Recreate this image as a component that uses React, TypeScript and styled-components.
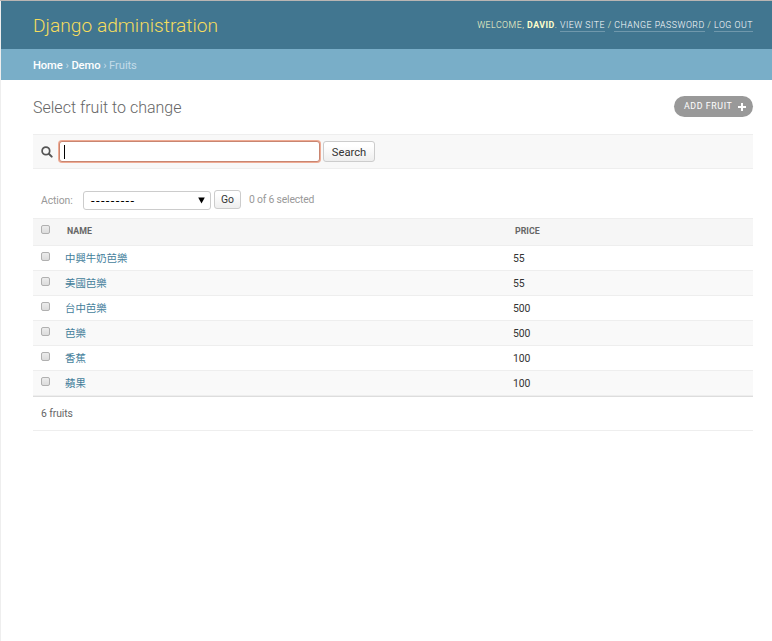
import React from "react";
import styled, { createGlobalStyle } from "styled-components";

const GlobalStyle = createGlobalStyle`
  * { box-sizing: border-box; }
  html, body { margin: 0; padding: 0; background: #fff; }
  body {
    font-family: Roboto, "Noto Sans CJK TC", sans-serif;
    font-size: 10.4px;
    color: #333;
    overflow: hidden;
  }
`;

const Page = styled.div`
  height: 641px;
  border-top: 1px solid #b9b5b3;
  display: flex;
`;

const Edge = styled.div`
  width: 1px;
  flex: none;
  background: #eee;
`;

const Main = styled.div`
  flex: 1;
  min-width: 0;
`;

const Header = styled.header`
  height: 48px;
  padding: 0 19px 0 32px;
  display: flex;
  justify-content: space-between;
  background: #417690;
  color: #ffc;
`;

const Brand = styled.h1`
  margin: 0;
  font-size: 19.2px;
  line-height: 50px;
  font-weight: 300;
  color: #f5dd5d;
  white-space: nowrap;
`;

const UserTools = styled.div`
  font-size: 8.8px;
  line-height: 10px;
  padding-top: 19px;
  font-weight: 300;
  letter-spacing: 0.5px;
  text-transform: uppercase;
  white-space: nowrap;
`;

const UserName = styled.strong`
  font-weight: 700;
`;

const ToolLink = styled.a`
  display: inline-block;
  height: 12px;
  color: #fff;
  border-bottom: 1px solid rgba(255, 255, 255, 0.25);
`;

const Breadcrumbs = styled.nav`
  height: 31px;
  padding-left: 32px;
  line-height: 33px;
  background: #79aec8;
  color: #c4dce8;
  font-size: 11.2px;
  letter-spacing: -0.08px;
  white-space: nowrap;
`;

const Crumb = styled.a`
  color: #fff;
  font-weight: 500;
`;

const Content = styled.main`
  padding: 0 19px 0 32px;
`;

const TitleRow = styled.div`
  height: 54px;
  display: flex;
  justify-content: space-between;
  align-items: flex-start;
  padding-top: 16px;
`;

const Title = styled.h2`
  margin: 0;
  font-size: 16px;
  line-height: 24px;
  font-weight: 300;
  color: #666;
`;

const AddButton = styled.a`
  width: 79px;
  height: 21px;
  padding: 0 7px 1px 10px;
  border-radius: 11px;
  background: #999;
  color: #fff;
  display: flex;
  align-items: center;
  justify-content: space-between;
  font-size: 8.8px;
  letter-spacing: 0.6px;
  white-space: nowrap;

  svg { margin-top: 2px; }
`;

const SearchBar = styled.div`
  height: 35px;
  padding-left: 8px;
  display: flex;
  align-items: center;
  background: #f8f8f8;
  border-top: 1px solid #eee;
  border-bottom: 1px solid #eee;
`;

const SearchField = styled.div`
  width: 261px;
  height: 21px;
  margin-left: 6px;
  margin-right: 3px;
  padding: 3px 4px;
  background: #fff;
  border: 1px solid #c98570;
  border-radius: 3px;
  box-shadow: 0 0 0 1px #efab94;
`;

const Caret = styled.div`
  width: 1px;
  height: 14px;
  background: #000;
`;

const Button = styled.button<{ $width: number; $height: number }>`
  width: ${(p) => p.$width}px;
  height: ${(p) => p.$height}px;
  padding: ${(p) => (p.$height > 20 ? "2px 0 0" : "0")};
  font-family: inherit;
  font-size: ${(p) => (p.$height > 20 ? 11.2 : 10.4)}px;
  line-height: 16px;
  color: #333;
  border: 1px solid #ccc;
  border-radius: 3px;
  background: linear-gradient(#fff 20%, #eee);
`;

const Actions = styled.div`
  height: 49px;
  padding: 21px 8px 0;
  display: flex;
  align-items: flex-start;
  color: #999;
  line-height: 19px;
  white-space: nowrap;
`;

const ActionLabel = styled.span`
  width: 42px;
  padding-top: 1px;
  font-size: 10.4px;
  letter-spacing: -0.1px;
`;

const Select = styled.div`
  width: 128px;
  height: 19px;
  margin: 1px 3px 0 0;
  padding: 0 5px 0 7px;
  display: flex;
  align-items: center;
  justify-content: space-between;
  color: #000;
  font-size: 11.2px;
  border: 1px solid #ccc;
  border-radius: 3px;
  background: #fff;
`;

const SelectValue = styled.span`
  padding-bottom: 1px;
  font-size: 13px;
  letter-spacing: 1.35px;
`;

const Count = styled.span`
  margin-left: 8px;
  letter-spacing: -0.19px;
`;

const Table = styled.div`
  border-bottom: 1px solid #ddd;
`;

const Row = styled.div<{ $alt: boolean }>`
  height: 25px;
  display: grid;
  grid-template-columns: 32px 448px 1fr;
  line-height: 26px;
  border-bottom: 1px solid #eee;
  background: ${(p) => (p.$alt ? "#f9f9f9" : "#fff")};
`;

const HeadRow = styled(Row)`
  height: 28px;
  border-top: 1px solid #eee;
  background: #f6f6f6;
  line-height: 25px;
  color: #666;
  font-size: 8.8px;
  font-weight: 700;
`;

const HeadCell = styled.div`
  padding-left: 2px;
`;

const Checkbox = styled.span`
  display: block;
  width: 9px;
  height: 9px;
  margin: 6px 0 0 8px;
  border: 1px solid #b0b0b0;
  border-radius: 2px;
  background: linear-gradient(#ececec, #dcdcdc);
`;

const NameLink = styled.a`
  color: #447e9b;
`;

const Price = styled.div`
  color: #333;
  letter-spacing: -0.15px;
`;

const Footer = styled.div`
  height: 34px;
  padding-left: 8px;
  line-height: 34px;
  letter-spacing: -0.1px;
  color: #666;
  border-bottom: 1px solid #eee;
`;

const fruits = [
  { name: "中興牛奶芭樂", price: 55 },
  { name: "美國芭樂", price: 55 },
  { name: "台中芭樂", price: 500 },
  { name: "芭樂", price: 500 },
  { name: "香蕉", price: 100 },
  { name: "蘋果", price: 100 },
];

const PlusIcon = () => (
  <svg width="8" height="8" viewBox="0 0 8 8">
    <path d="M4 0.3V7.7M0.3 4H7.7" stroke="#fff" strokeWidth="2" strokeLinecap="round" />
  </svg>
);

const SearchIcon = () => (
  <svg width="12" height="12" viewBox="0 0 12 12" fill="none" stroke="#555">
    <circle cx="4.9" cy="4.9" r="3.8" strokeWidth="1.7" />
    <path d="M7.8 7.8L10.7 10.6" strokeWidth="2" strokeLinecap="round" />
  </svg>
);

const ArrowIcon = () => (
  <svg width="7" height="7" viewBox="0 0 7 7">
    <path d="M0.2 0.5H6.8L3.5 6.5Z" fill="#000" />
  </svg>
);

export default function App() {
  return (
    <>
      <GlobalStyle />
      <Page>
        <Edge />
        <Main>
          <Header>
            <Brand>Django administration</Brand>
            <UserTools>
              Welcome, <UserName>David</UserName>. <ToolLink>View site</ToolLink> /{" "}
              <ToolLink>Change password</ToolLink> / <ToolLink>Log out</ToolLink>
            </UserTools>
          </Header>
          <Breadcrumbs>
            <Crumb>Home</Crumb> › <Crumb>Demo</Crumb> › Fruits
          </Breadcrumbs>
          <Content>
            <TitleRow>
              <Title>Select fruit to change</Title>
              <AddButton>
                ADD FRUIT <PlusIcon />
              </AddButton>
            </TitleRow>
            <SearchBar>
              <SearchIcon />
              <SearchField>
                <Caret />
              </SearchField>
              <Button $width={52} $height={21}>Search</Button>
            </SearchBar>
            <Actions>
              <ActionLabel>Action:</ActionLabel>
              <Select>
                <SelectValue>---------</SelectValue>
                <ArrowIcon />
              </Select>
              <Button $width={27} $height={19}>Go</Button>
              <Count>0 of 6 selected</Count>
            </Actions>
            <Table>
              <HeadRow $alt={false}>
                <Checkbox />
                <HeadCell>NAME</HeadCell>
                <HeadCell>PRICE</HeadCell>
              </HeadRow>
              {fruits.map((fruit, i) => (
                <Row key={fruit.name} $alt={i % 2 === 1}>
                  <Checkbox />
                  <NameLink>{fruit.name}</NameLink>
                  <Price>{fruit.price}</Price>
                </Row>
              ))}
            </Table>
            <Footer>6 fruits</Footer>
          </Content>
        </Main>
      </Page>
    </>
  );
}
